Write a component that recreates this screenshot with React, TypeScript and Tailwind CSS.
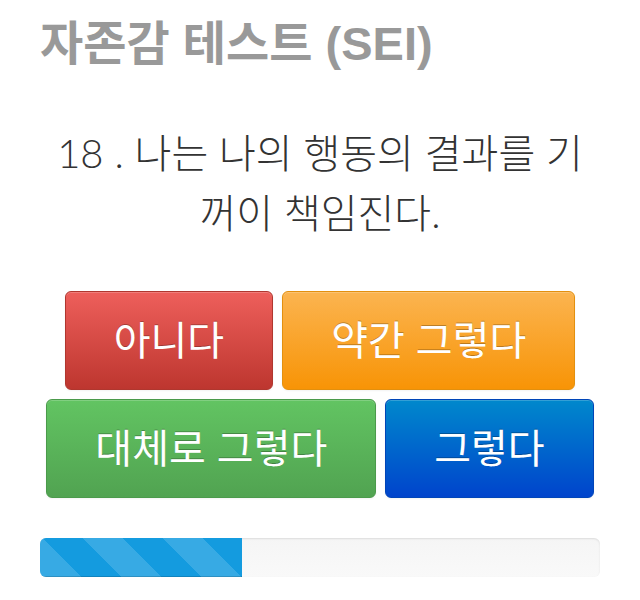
import React from "react";

type Choice = {
  label: string;
  className: string;
};

const choices: Choice[] = [
  {
    label: "아니다",
    className:
      "bg-[linear-gradient(to_bottom,#ee5f5b,#bd362f)] border-[#b0372f]",
  },
  {
    label: "약간 그렇다",
    className:
      "bg-[linear-gradient(to_bottom,#fbb450,#f89406)] border-[#e3900f]",
  },
  {
    label: "대체로 그렇다",
    className:
      "bg-[linear-gradient(to_bottom,#62c462,#51a351)] border-[#4b9a4b]",
  },
  {
    label: "그렇다",
    className:
      "bg-[linear-gradient(to_bottom,#0088cc,#0044cc)] border-[#0045b8]",
  },
];

const progress = 36;

export default function App() {
  return (
    <div className="w-[640px] h-[600px] bg-white px-10 font-['Liberation_Sans','Noto_Sans_CJK_KR',sans-serif]">
      <h1 className="pt-[17px] text-[47px] font-bold leading-[54px] text-[#999999]">
        자존감 테스트 (SEI)
      </h1>

      <p className="mt-[52px] text-center text-[40px] font-light leading-[60px] text-[#333333] font-['Lato','Noto_Sans_CJK_KR_Light','Noto_Sans_CJK_KR_DemiLight','Noto_Sans_CJK_KR',sans-serif]">
        18 . 나는 나의 행동의 결과를 기
        <br />
        꺼이 책임진다.
      </p>

      <div className="mt-[48px] flex flex-wrap justify-center gap-[9px]">
        {choices.map((c) => (
          <button
            key={c.label}
            className={`h-[99px] rounded-[6px] border px-[48px] text-[40px] leading-none text-white shadow-[inset_0_1px_0_rgba(255,255,255,0.2),0_1px_2px_rgba(0,0,0,0.05)] [text-shadow:0_-1px_0_rgba(0,0,0,0.25)] ${c.className}`}
          >
            {c.label}
          </button>
        ))}
      </div>

      <div className="mt-[40px] h-[39px] overflow-hidden rounded-[6px] bg-[linear-gradient(to_bottom,#f5f5f5,#f9f9f9)] shadow-[inset_0_1px_2px_rgba(0,0,0,0.1)]">
        <div
          className="h-full bg-[#149bdf] bg-[linear-gradient(45deg,rgba(255,255,255,0.15)_25%,transparent_25%,transparent_50%,rgba(255,255,255,0.15)_50%,rgba(255,255,255,0.15)_75%,transparent_75%,transparent)] bg-[length:80px_80px] bg-[position:43px_0] shadow-[inset_0_-1px_0_rgba(0,0,0,0.15)]"
          style={{ width: `${progress}%` }}
        />
      </div>
    </div>
  );
}
